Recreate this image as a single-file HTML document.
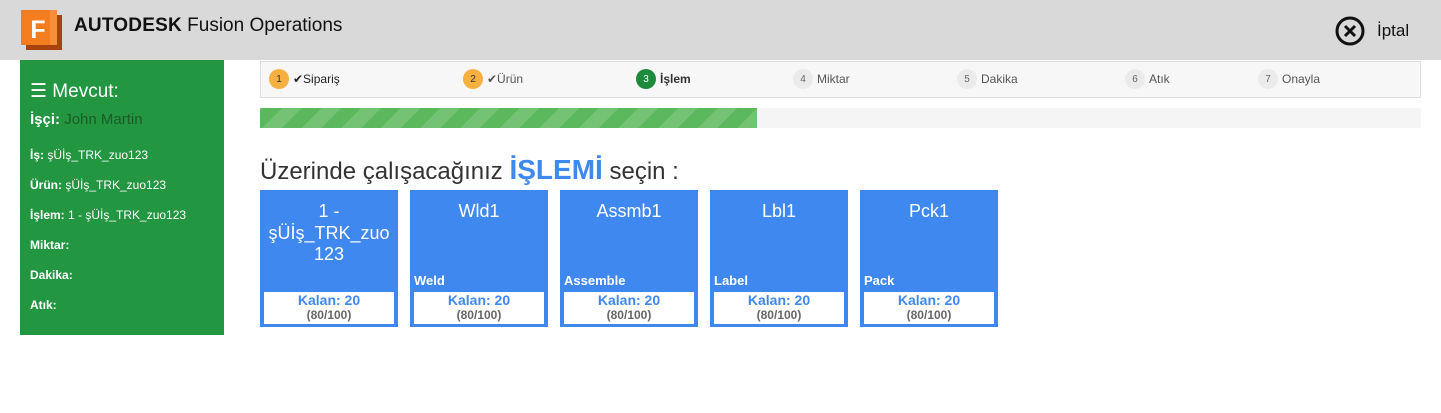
<!DOCTYPE html>
<html><head><meta charset="utf-8"><style>
*{margin:0;padding:0;box-sizing:border-box}
body{width:1441px;height:413px;background:#fff;font-family:"Liberation Sans","DejaVu Sans",sans-serif;position:relative;overflow:hidden}
.hdr{position:absolute;left:0;top:0;width:1441px;height:60px;background:#d9d9d9}
.logo{position:absolute;left:19px;top:9px;width:44px;height:42px}
.brand{position:absolute;left:74px;top:15px;font-size:19px;color:#111}
.brand b{font-weight:900;letter-spacing:0.2px}
.cancel{position:absolute;left:1335px;top:16px;display:flex;align-items:center;font-size:17px;color:#111}
.side{position:absolute;left:20px;top:60px;width:204px;height:275px;background:#239641;color:#fff}
.side .t{position:absolute;left:10px;top:20px;font-size:19px}
.side .w{position:absolute;left:10px;top:51px;font-size:15px}
.side .w span{color:#1c5a28}
.side .r{position:absolute;left:10px;font-size:12px}
.steps{position:absolute;left:260px;top:61px;width:1161px;height:37px;background:#f7f7f7;border:1px solid #ddd;font-size:12px;color:#555}
.st{position:absolute;top:7px;display:flex;align-items:center}
.c{width:20px;height:20px;border-radius:50%;background:#ebebeb;font-size:10px;display:flex;align-items:center;justify-content:center;margin-right:4px;color:#666}
.c.o{background:#f5b041;color:#333}
.c.g{background:#1e8a3b;color:#fff}
.prog{position:absolute;left:260px;top:108px;width:1161px;height:20px;background:#f5f5f5}
.fill{position:absolute;left:0;top:0;width:497px;height:20px;background:#5cb85c;background-image:repeating-linear-gradient(-45deg,rgba(255,255,255,.15) 0 14px,transparent 14px 28px)}
h1{position:absolute;left:260px;top:154px;font-size:24px;font-weight:normal;color:#333}
h1 b{color:#3f88f0;font-size:28px}
.card{position:absolute;top:190px;width:138px;height:137px;background:#3f88f0;color:#fff}
.card .n{position:absolute;top:11px;left:0;width:100%;text-align:center;font-size:18px;line-height:21.5px}
.card .l{position:absolute;left:4px;top:83px;font-size:13px;font-weight:bold}
.card .k{position:absolute;left:4px;top:102px;width:130px;height:32px;background:#fff;text-align:center}
.k .a{color:#3f88f0;font-weight:bold;font-size:14px;line-height:17px}
.k .b{color:#666;font-weight:bold;font-size:12px;line-height:13px}
</style></head><body>
<div class="hdr">
<svg class="logo" viewBox="0 0 44 42"><path d="M7 6h36v35H7z" fill="#a8420f"/><path d="M2 1h36v35H2z" fill="#f47d20"/><path d="M31 1h7v35h-7z" fill="#f68f3c"/><text x="19" y="29" font-family="Liberation Sans" font-weight="bold" font-size="25" fill="#fff" text-anchor="middle">F</text></svg>
<div class="brand"><b>AUTODESK</b> Fusion Operations</div>
<div class="cancel"><svg width="30" height="30" viewBox="0 0 30 30"><circle cx="15" cy="15" r="13" fill="none" stroke="#111" stroke-width="3"/><path d="M10 10l10 10M20 10L10 20" stroke="#111" stroke-width="3"/></svg><span style="margin-left:12px">İptal</span></div>
</div>
<div class="side">
<div class="t">☰ Mevcut:</div>
<div class="w"><b>İşçi:</b> <span>John Martin</span></div>
<div class="r" style="top:88px"><b>İş:</b> şÜİş_TRK_zuo123</div>
<div class="r" style="top:118px"><b>Ürün:</b> şÜİş_TRK_zuo123</div>
<div class="r" style="top:148px"><b>İşlem:</b> 1 - şÜİş_TRK_zuo123</div>
<div class="r" style="top:178px"><b>Miktar:</b></div>
<div class="r" style="top:208px"><b>Dakika:</b></div>
<div class="r" style="top:238px"><b>Atık:</b></div>
</div>
<div class="steps">
<div class="st" style="left:8px"><div class="c o">1</div><span style="color:#222">✔Sipariş</span></div>
<div class="st" style="left:202px"><div class="c o">2</div>✔Ürün</div>
<div class="st" style="left:375px"><div class="c g">3</div><b style="color:#333">İşlem</b></div>
<div class="st" style="left:532px"><div class="c">4</div>Miktar</div>
<div class="st" style="left:696px"><div class="c">5</div>Dakika</div>
<div class="st" style="left:864px"><div class="c">6</div>Atık</div>
<div class="st" style="left:997px"><div class="c">7</div>Onayla</div>
</div>
<div class="prog"><div class="fill"></div></div>
<h1>Üzerinde çalışacağınız <b>İŞLEMİ</b> seçin :</h1>
<div class="card" style="left:260px"><div class="n">1 -<br>şÜİş_TRK_zuo<br>123</div><div class="k"><div class="a">Kalan: 20</div><div class="b">(80/100)</div></div></div>
<div class="card" style="left:410px"><div class="n">Wld1</div><div class="l">Weld</div><div class="k"><div class="a">Kalan: 20</div><div class="b">(80/100)</div></div></div>
<div class="card" style="left:560px"><div class="n">Assmb1</div><div class="l">Assemble</div><div class="k"><div class="a">Kalan: 20</div><div class="b">(80/100)</div></div></div>
<div class="card" style="left:710px"><div class="n">Lbl1</div><div class="l">Label</div><div class="k"><div class="a">Kalan: 20</div><div class="b">(80/100)</div></div></div>
<div class="card" style="left:860px"><div class="n">Pck1</div><div class="l">Pack</div><div class="k"><div class="a">Kalan: 20</div><div class="b">(80/100)</div></div></div>
</body></html>
